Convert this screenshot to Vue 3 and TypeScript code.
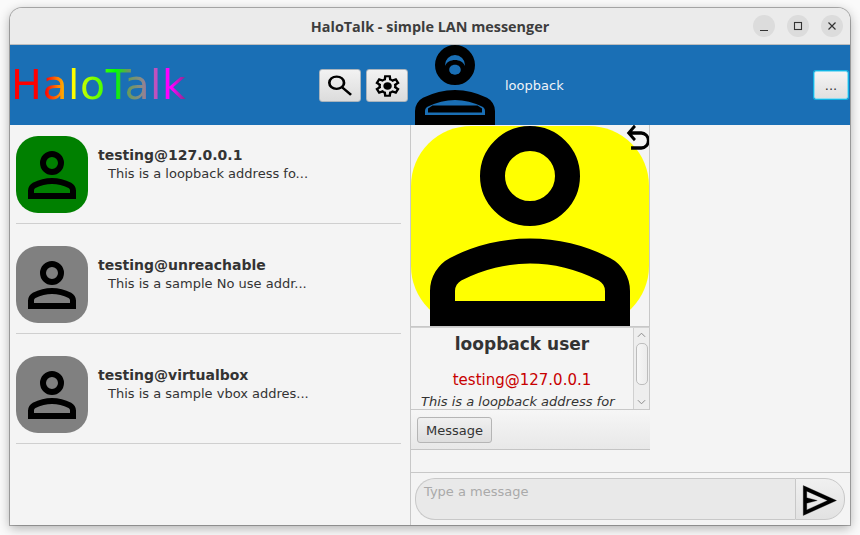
<script setup lang="ts">
const personPath = "M12 12q-1.65 0-2.825-1.175Q8 9.65 8 8q0-1.65 1.175-2.825Q10.35 4 12 4q1.65 0 2.825 1.175Q16 6.35 16 8q0 1.65-1.175 2.825Q13.65 12 12 12Zm-8 8v-2.8q0-.85.438-1.563.437-.712 1.162-1.087 1.55-.775 3.15-1.163Q10.35 13 12 13t3.25.387q1.6.388 3.15 1.163.725.375 1.162 1.087Q20 16.35 20 17.2V20Zm2-2h12v-.8q0-.275-.137-.5-.138-.225-.363-.35-1.35-.675-2.725-1.013Q13.4 15 12 15t-2.775.337Q7.85 15.675 6.5 16.35q-.225.125-.362.35-.138.225-.138.5Zm6-8q.825 0 1.413-.588Q14 8.825 14 8t-.587-1.412Q12.825 6 12 6q-.825 0-1.412.588Q10 7.175 10 8t.588 1.412Q11.175 10 12 10Z";

interface Contact { id: string; note: string; tone: string }
const contacts: Contact[] = [
  { id: "testing@127.0.0.1", note: "This is a loopback address fo...", tone: "online" },
  { id: "testing@unreachable", note: "This is a sample No use addr...", tone: "offline" },
  { id: "testing@virtualbox", note: "This is a sample vbox addres...", tone: "offline" },
];
</script>

<template>
  <div class="desk">
    <div class="window">
      <header class="titlebar">
        <span class="title">HaloTalk - simple LAN messenger</span>
        <div class="wm">
          <span class="wm-btn"><svg width="12" height="12" viewBox="0 0 12 12"><path d="M2 10.5h8" stroke="#333" stroke-width="1.2" fill="none"/></svg></span>
          <span class="wm-btn"><svg width="12" height="12" viewBox="0 0 12 12"><rect x="2.5" y="2.5" width="7" height="7" stroke="#333" stroke-width="1.1" fill="none"/></svg></span>
          <span class="wm-btn"><svg width="12" height="12" viewBox="0 0 12 12"><path d="M2.5 2.5l7 7M9.5 2.5l-7 7" stroke="#333" stroke-width="1.2" fill="none"/></svg></span>
        </div>
      </header>

      <div class="topbar">
        <div class="logo">HaloTalk</div>
        <button class="tool first">
          <svg class="ic-search" viewBox="0 0 24 24" preserveAspectRatio="none"><path d="M19.6 21l-6.3-6.3Q12.55 15.3 11.575 15.65 10.6 16 9.5 16q-2.725 0-4.612-1.888Q3 12.225 3 9.5t1.888-4.612Q6.775 3 9.5 3t4.612 1.888Q16 6.775 16 9.5q0 1.1-.35 2.075-.35.975-.95 1.725l6.3 6.3ZM9.5 14q1.875 0 3.188-1.312Q14 11.375 14 9.5q0-1.875-1.312-3.188Q11.375 5 9.5 5 7.625 5 6.312 6.312 5 7.625 5 9.5q0 1.875 1.312 3.188Q7.625 14 9.5 14Z"/></svg>
        </button>
        <button class="tool">
          <svg class="ic-gear" viewBox="0 0 24 24" preserveAspectRatio="none"><path d="m9.25 22-.4-3.2q-.325-.125-.612-.3-.288-.175-.563-.375L4.7 19.375l-2.75-4.75 2.575-1.95Q4.5 12.5 4.5 12.337v-.675q0-.162.025-.337L1.95 9.375l2.75-4.75 2.975 1.25q.275-.2.575-.375.3-.175.6-.3l.4-3.2h5.5l.4 3.2q.325.125.613.3.287.175.562.375l2.975-1.25 2.75 4.75-2.575 1.95q.025.175.025.337v.675q0 .163-.05.338l2.575 1.95-2.75 4.75-2.95-1.25q-.275.2-.575.375-.3.175-.6.3l-.4 3.2Zm1.75-2h1.975l.35-2.65q.775-.2 1.438-.587.662-.388 1.212-.938l2.475 1.025.975-1.7-2.15-1.625q.125-.35.175-.738.05-.387.05-.787t-.05-.787q-.05-.388-.175-.738l2.15-1.625-.975-1.7-2.475 1.05q-.55-.575-1.212-.963-.663-.387-1.438-.587L13 4h-1.975l-.35 2.65q-.775.2-1.437.587-.663.388-1.213.938L5.55 7.15l-.975 1.7 2.15 1.6q-.125.375-.175.75-.05.375-.05.8 0 .4.05.775t.175.75l-2.15 1.625.975 1.7 2.475-1.05q.55.575 1.213.962.662.388 1.437.588Zm1.05-4.5q1.45 0 2.475-1.025Q15.55 13.45 15.55 12q0-1.45-1.025-2.475Q13.5 8.5 12.05 8.5q-1.475 0-2.488 1.025Q8.55 10.55 8.55 12q0 1.45 1.012 2.475Q10.575 15.5 12.05 15.5Z"/></svg>
        </button>
        <svg class="me" viewBox="4 4 16 16">
          <path :d="personPath"/>
          <path fill-rule="evenodd" d="M10 8.2C10.6 6.6 13.4 6.6 14 8.2V10.4H10ZM12 7.95C11.3 7.95 10.85 8.4 10.85 8.95C10.85 9.5 11.3 9.95 12 9.95C12.7 9.95 13.15 9.5 13.15 8.95C13.15 8.4 12.7 7.95 12 7.95Z"/>
          <path d="M6.6 16.7L7.5 16.1H16.5L17.4 16.7V17.5H6.6Z"/>
        </svg>
        <span class="me-name">loopback</span>
        <button class="more">...</button>
      </div>

      <div class="body">
        <aside class="list">
          <div v-for="c in contacts" :key="c.id" class="row">
            <div class="avatar" :class="c.tone">
              <svg viewBox="4 4 16 16"><path :d="personPath"/></svg>
            </div>
            <div class="meta">
              <div class="name">{{ c.id }}</div>
              <div class="note">{{ c.note }}</div>
            </div>
          </div>
        </aside>

        <main class="chat">
          <section class="card">
            <div class="portrait">
              <svg class="big" viewBox="4 4 16 16"><path :d="personPath"/></svg>
              <svg class="back" viewBox="0 0 24 24" preserveAspectRatio="none"><path d="M7 19v-2h7.1q1.575 0 2.738-1T18 13.5q0-1.5-1.162-2.5T14.1 10H7.8l2.6 2.6L9 14 4 9l5-5 1.4 1.4L7.8 8h6.3q2.425 0 4.163 1.575Q20 11.15 20 13.5t-1.737 3.925Q16.525 19 14.1 19Z"/></svg>
            </div>
            <div class="info">
              <div class="info-text">
                <div class="u-name">loopback user</div>
                <div class="u-addr">testing@127.0.0.1</div>
                <div class="u-desc">This is a loopback address for</div>
              </div>
              <div class="scroll">
                <svg class="chev" viewBox="0 0 10 6"><path d="M1 5l4-4 4 4" fill="none" stroke="#8a8a8a" stroke-width="1.1"/></svg>
                <div class="thumb"></div>
                <svg class="chev" viewBox="0 0 10 6"><path d="M1 1l4 4 4-4" fill="none" stroke="#8a8a8a" stroke-width="1.1"/></svg>
              </div>
            </div>
            <div class="actions"><button class="msg-btn">Message</button></div>
          </section>
          <div class="spacer"></div>
          <footer class="composer">
            <div class="input">Type a message</div>
            <button class="send">
              <svg viewBox="0 0 24 24" preserveAspectRatio="none"><path d="M3 20V4l19 8Zm2-3 11.85-5L5 7v3.5l6 1.5-6 1.5Z" stroke="#000" stroke-width=".15"/></svg>
            </button>
          </footer>
        </main>
      </div>
    </div>
  </div>
</template>

<style>
html, body { margin: 0; background: #fafafa; }
</style>

<style scoped>
.desk {
  width: 860px;
  height: 535px;
  box-sizing: border-box;
  padding: 8px 10px 10px;
  overflow: hidden;
  font-family: "DejaVu Sans", sans-serif;
  color: #333;
}
.window {
  height: 517px;
  display: flex;
  flex-direction: column;
  background: #f4f4f4;
  border-radius: 12px 12px 0 0;
  box-shadow: 0 0 0 1px rgba(0,0,0,.28), 0 3px 12px rgba(0,0,0,.32);
  overflow: hidden;
}
.titlebar {
  height: 37px;
  flex: none;
  box-sizing: border-box;
  display: flex;
  align-items: center;
  justify-content: center;
  position: relative;
  background: #ebebeb;
  border-bottom: 1px solid #bdbdbd;
}
.title {
  font-family: "Open Sans", sans-serif;
  font-weight: 700;
  font-size: 14.4px;
  color: #3d3d3d;
}
.wm {
  position: absolute;
  right: 7px;
  top: 7px;
  display: flex;
  gap: 12px;
}
.wm-btn {
  width: 22px;
  height: 22px;
  border-radius: 50%;
  background: #dcdcdc;
  display: flex;
  align-items: center;
  justify-content: center;
}
.topbar {
  height: 80px;
  flex: none;
  display: flex;
  align-items: center;
  background: #1a6fb5;
}
.logo {
  width: 309px;
  flex: none;
  font-size: 41px;
  letter-spacing: .55px;
  line-height: 80px;
  height: 80px;
  box-sizing: border-box;
  padding-left: 1px;
  background: linear-gradient(90deg, #f00 0, #f00 20%, #ff7a00 27%, #ff0 36%, #9f0 45%, #0f0 60%, #6a9a5a 67%, #8a8a8a 75%, #c050c0 83%, #f0f 89%, #f0f 92%, #803080 100%);
  background-size: 176px 100%;
  background-repeat: no-repeat;
  -webkit-background-clip: text;
  background-clip: text;
  color: transparent;
}
.tool {
  width: 42px;
  height: 33px;
  margin-top: 1px;
  padding: 0;
  display: flex;
  align-items: center;
  justify-content: center;
  border: 1px solid #a9b4bd;
  border-radius: 3px;
  background: linear-gradient(#f2f2f2, #dcdcdc);
  margin-left: 5px;
}
.tool.first { margin-left: 0; }
.ic-search { width: 32px; height: 27px; }
.ic-gear { width: 29px; height: 26px; }
.me {
  width: 80px;
  height: 80px;
  margin-left: 7px;
  flex: none;
}
.me-name {
  margin-left: 10px;
  font-size: 13px;
  color: #eef3f8;
}
.more {
  margin-left: auto;
  margin-right: 2px;
  width: 34px;
  height: 28px;
  padding: 0;
  border: 1px solid #8fdcf2;
  border-radius: 2px;
  background: linear-gradient(#f4f4f4, #e0e0e0);
  color: #333;
  font: 13px "DejaVu Sans", sans-serif;
  box-shadow: 0 0 0 1px #12b4e4;
}
.body {
  flex: 1;
  display: flex;
  min-height: 0;
}
.list {
  width: 401px;
  flex: none;
  box-sizing: border-box;
  padding: 0 9px 0 6px;
  border-right: 1px solid #c8c8c8;
}
.row {
  height: 110px;
  box-sizing: border-box;
  display: flex;
  border-bottom: 1px solid #cfcfcf;
}
.row:first-child { height: 99px; padding-top: 11px; }
.row:not(:first-child) { padding-top: 22px; }
.avatar {
  width: 72px;
  height: 77px;
  flex: none;
  display: flex;
  justify-content: center;
  padding-top: 15px;
  box-sizing: border-box;
  border-radius: 22px;
}
.avatar svg { width: 48px; height: 48px; }
.avatar.online { background: #008000; }
.avatar.offline { background: #808080; }
.meta { margin-left: 10px; padding-top: 10px; }
.name {
  font-weight: 700;
  font-size: 14px;
  line-height: 18px;
  color: #333;
}
.note {
  padding-left: 10px;
  font-size: 13px;
  line-height: 20px;
  color: #333;
}
.chat {
  flex: 1;
  display: flex;
  flex-direction: column;
  min-width: 0;
}
.card {
  width: 239px;
  box-sizing: border-box;
  flex: none;
}
.portrait {
  position: relative;
  height: 202px;
  box-sizing: border-box;
  padding-top: 1px;
  border-right: 1px solid #c8c8c8;
  border-bottom: 1px solid #c8c8c8;
  overflow: hidden;
}
.portrait::before {
  content: "";
  display: block;
  width: 238px;
  height: 200px;
  border-radius: 60px;
  background: #ff0;
}
.big {
  position: absolute;
  left: 19px;
  top: 1px;
  width: 200px;
  height: 200px;
}
.back {
  position: absolute;
  left: 210px;
  top: -7px;
  width: 34.5px;
  height: 40px;
}
.info {
  height: 83px;
  display: flex;
  box-sizing: border-box;
  border-top: 1px solid #d2d2d2;
  border-right: 1px solid #c8c8c8;
  border-bottom: 1px solid #c8c8c8;
  overflow: hidden;
}
.info-text {
  flex: 1;
  min-width: 0;
  text-align: center;
  overflow: hidden;
  white-space: nowrap;
}
.u-name {
  font-weight: 700;
  font-size: 17px;
  line-height: 20px;
  margin-top: 6px;
}
.u-addr {
  font-size: 15px;
  line-height: 18px;
  color: #c80000;
  margin-top: 17px;
}
.u-desc {
  font-style: italic;
  font-size: 13px;
  line-height: 18px;
  margin-top: 4px;
  text-align: left;
  padding-left: 10px;
}
.scroll {
  width: 16px;
  flex: none;
  background: #eeeeee;
  border-left: 1px solid #d0d0d0;
  box-sizing: border-box;
  display: flex;
  flex-direction: column;
  align-items: center;
  justify-content: space-between;
  padding: 4px 0;
}
.chev { width: 9px; height: 6px; }
.thumb {
  flex: 1;
  width: 12px;
  max-height: 42px;
  margin: 5px 0 auto;
  border: 1px solid #bdbdbd;
  border-radius: 5px;
  background: linear-gradient(90deg, #f6f6f6, #ececec);
  box-sizing: border-box;
}
.actions {
  height: 40px;
  box-sizing: border-box;
  padding: 7px 6px;
  background: linear-gradient(#f6f6f6, #e8e8e8);
  border-bottom: 1px solid #c4c4c4;
}
.msg-btn {
  display: block;
  width: 75px;
  height: 26px;
  padding: 0;
  border: 1px solid #b5b5b5;
  border-radius: 3px;
  background: linear-gradient(#f0f0f0, #dedede);
  font: 13px "DejaVu Sans", sans-serif;
  color: #333;
}
.spacer { flex: 1; }
.composer {
  height: 53px;
  flex: none;
  display: flex;
  box-sizing: border-box;
  padding: 5px 5px 5px 4px;
  border-top: 1px solid #c8c8c8;
}
.input {
  width: 380px;
  box-sizing: border-box;
  padding: 4px 0 0 8px;
  background: #e9e9e9;
  border: 1px solid #c8c8c8;
  border-right: 0;
  border-radius: 20px 0 0 20px;
  color: #aaa;
  font-size: 13px;
  line-height: 18px;
}
.send {
  width: 50px;
  padding: 0;
  display: flex;
  align-items: center;
  border: 1px solid #c8c8c8;
  border-radius: 0 20px 20px 0;
  background: linear-gradient(#f0f0f0, #e2e2e2);
}
.send svg { width: 42px; height: 45px; margin-left: 2px; margin-top: 3px; flex: none; }
</style>
